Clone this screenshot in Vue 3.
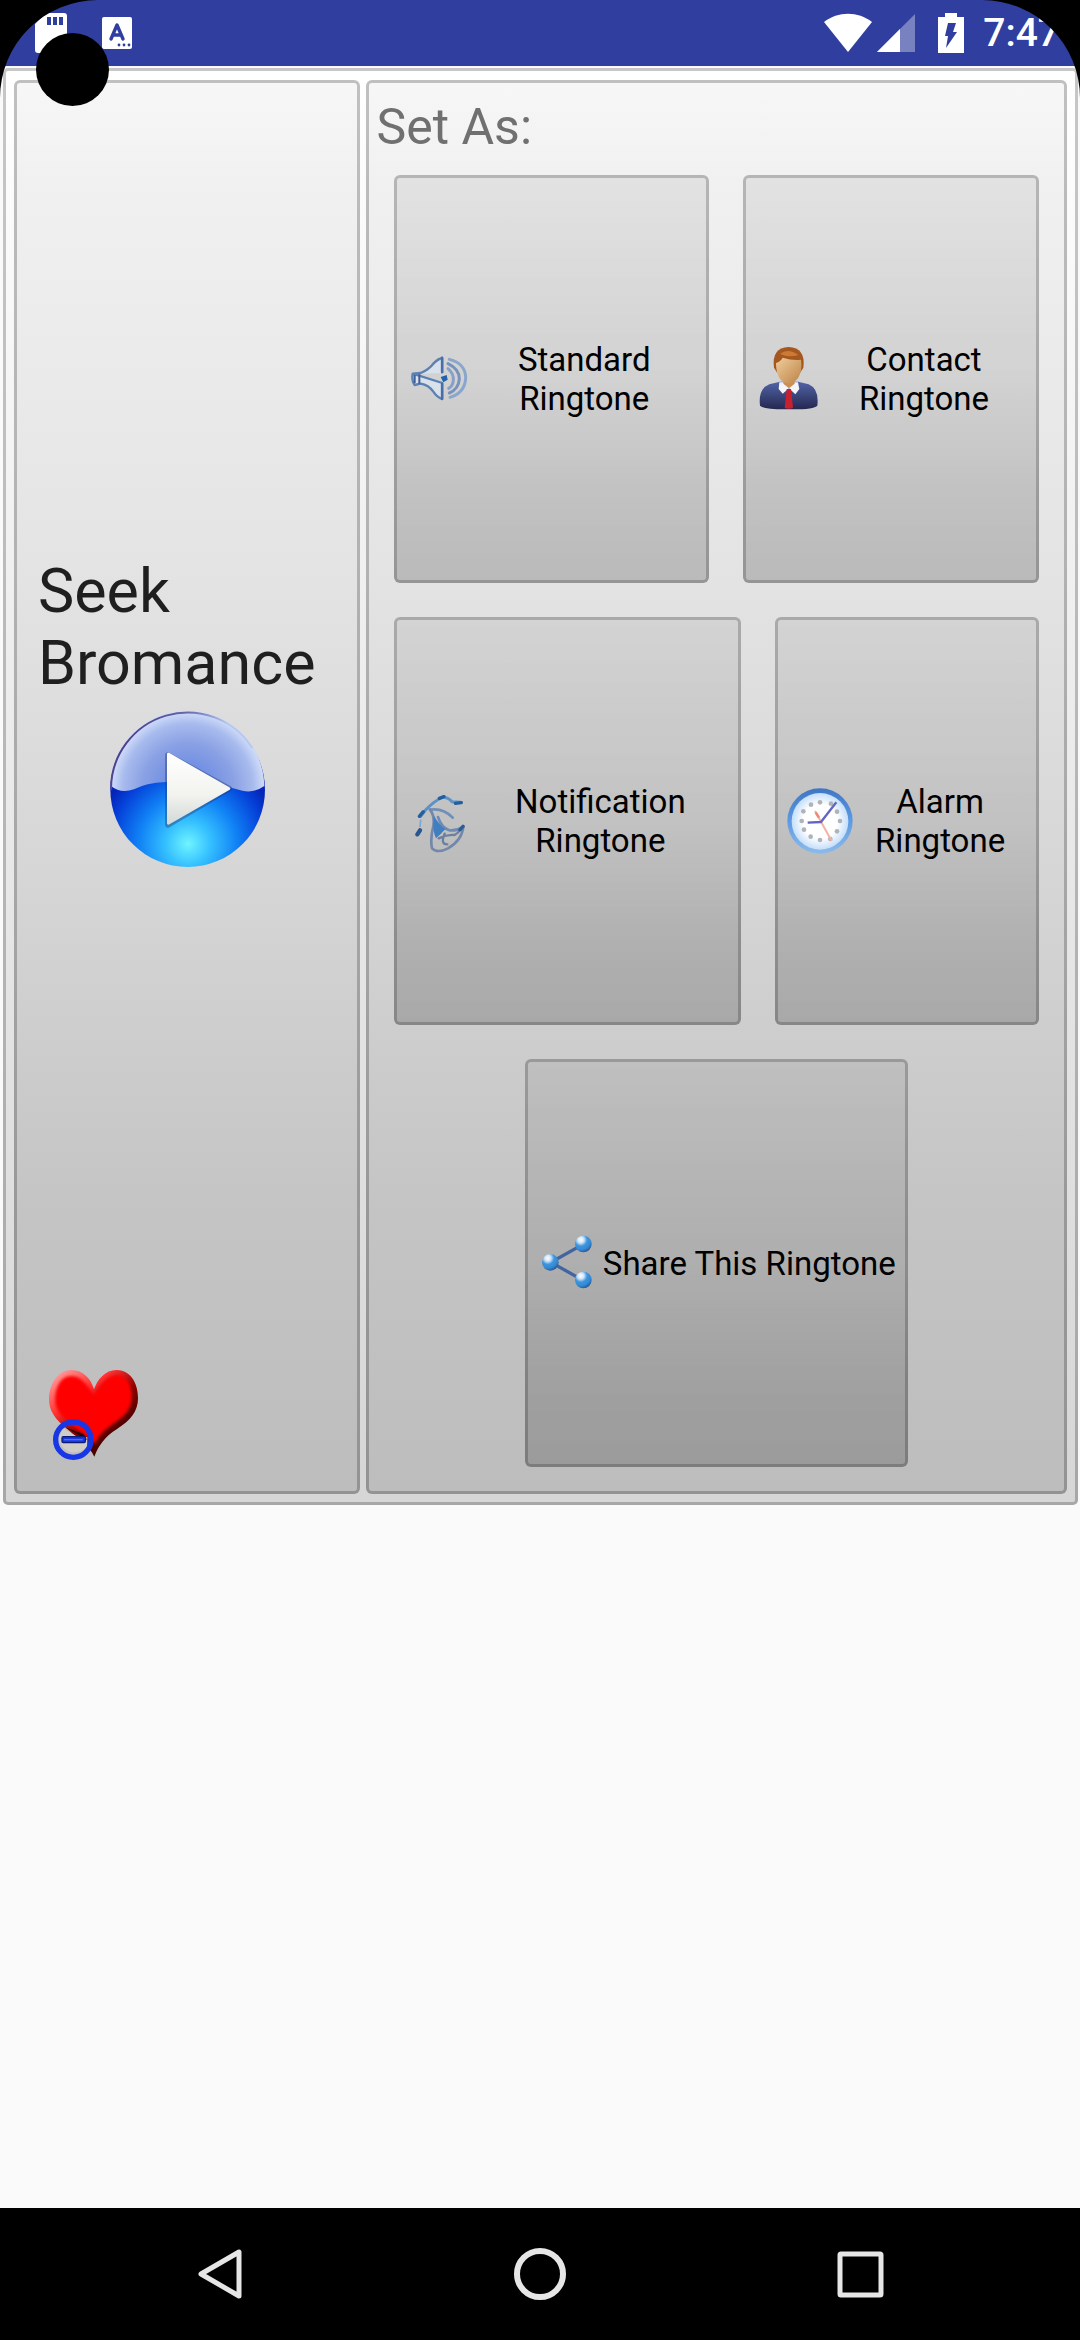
<script setup>
import { ref } from 'vue'

const title = 'Seek Bromance'
const time = ref('7:47')
const isPlaying = ref(false)
const lastAction = ref('')

function togglePlay() {
  isPlaying.value = !isPlaying.value
}

function setAs(kind) {
  lastAction.value = kind
}

// Hour marks of the little alarm clock
const hourMarks = [
  [300, 128], [318, 152], [327, 180], [318, 211], [298, 234], [267, 237],
  [239, 227], [219, 206], [212, 180], [217, 151], [240, 131], [267, 124]
]
</script>

<template>
  <div class="screen">
    <header class="status-bar">
      <div class="status-left">
        <svg class="status-icon" viewBox="0 0 36 44" aria-hidden="true">
          <path d="M14 2h18a3 3 0 0 1 3 3v34a3 3 0 0 1-3 3H6a3 3 0 0 1-3-3V13z" fill="#fff" />
          <path d="M15 6h4v8h-4zM21 6h4v8h-4zM27 6h4v8h-4z" fill="#303f9f" />
        </svg>
        <svg class="status-icon" viewBox="0 0 36 44" aria-hidden="true">
          <rect x="3" y="6" width="30" height="32" rx="2" fill="#fff" />
          <path d="M12 28l6-14 6 14M14 24h8" fill="none" stroke="#303f9f" stroke-width="3.4" stroke-linecap="round" stroke-linejoin="round" />
          <circle cx="20" cy="34" r="1.4" fill="#303f9f" />
          <circle cx="25" cy="34" r="1.4" fill="#303f9f" />
          <circle cx="30" cy="34" r="1.4" fill="#303f9f" />
        </svg>
      </div>
      <div class="status-right">
        <svg class="wifi" viewBox="0 0 48 40" aria-hidden="true">
          <path d="M0 9C14-2 34-2 48 9L24 39z" fill="#fff" />
        </svg>
        <svg class="signal" viewBox="0 0 38 40" aria-hidden="true">
          <path d="M0 39L38 1v38z" fill="#fff" opacity="0.35" />
          <path d="M0 39L23 16v23z" fill="#fff" />
        </svg>
        <svg class="battery" viewBox="0 0 26 40" aria-hidden="true">
          <path d="M7 0h12v4h7v36H0V4h7z" fill="#fff" />
          <path d="M10 10h8l-3 9h4L8 35l2-12H7z" fill="#303f9f" />
        </svg>
        <span class="time">{{ time }}</span>
      </div>
    </header>

    <main class="content">
      <div class="card">
        <section class="panel song">
          <h1 class="song-title">{{ title }}</h1>
          <button class="play-btn" aria-label="Play" @click="togglePlay">
            <svg viewBox="18 21 552 552" aria-hidden="true">
              <defs>
                <radialGradient id="orb" gradientUnits="userSpaceOnUse" cx="297" cy="455" r="270">
                  <stop offset="0" stop-color="#6ff4ff" />
                  <stop offset="0.25" stop-color="#35c0ff" />
                  <stop offset="0.55" stop-color="#1080f5" />
                  <stop offset="0.85" stop-color="#0540d8" />
                  <stop offset="1" stop-color="#0425b8" />
                </radialGradient>
                <radialGradient id="gloss" gradientUnits="userSpaceOnUse" cx="297" cy="290" r="230">
                  <stop offset="0" stop-color="#5a7fe2" />
                  <stop offset="0.6" stop-color="#8aa1e4" />
                  <stop offset="0.85" stop-color="#a8bbee" />
                  <stop offset="1" stop-color="#cfdcf8" />
                </radialGradient>
                <linearGradient id="rim" x1="0" y1="0" x2="1" y2="0.3">
                  <stop offset="0" stop-color="#35257f" />
                  <stop offset="0.5" stop-color="#6a6aae" />
                  <stop offset="0.8" stop-color="#b8c8ec" />
                </linearGradient>
                <linearGradient id="arrow" x1="0" y1="0" x2="0" y2="1">
                  <stop offset="0" stop-color="#fff" />
                  <stop offset="0.6" stop-color="#f2f2ee" />
                  <stop offset="1" stop-color="#d2dad8" />
                </linearGradient>
              </defs>
              <circle cx="296" cy="293" r="232" fill="url(#orb)" />
              <path d="M66 290A230 230 0 0 1 526 282Q495 304 460 296Q415 284 380 275Q300 262 230 270Q170 273 135 292Q95 306 66 282z" fill="url(#gloss)" />
              <path d="M66 293A230 230 0 0 1 490 168" fill="none" stroke="url(#rim)" stroke-width="6" />
              <path d="M237 190L420 290L237 398z" fill="#25356e" stroke="#25356e" stroke-width="18" stroke-linejoin="round" opacity="0.4" />
              <path d="M238 186L420 290L238 394z" fill="url(#arrow)" stroke="url(#arrow)" stroke-width="8" stroke-linejoin="round" />
            </svg>
          </button>
          <button class="fav-btn" aria-label="Remove from favorites">
            <svg viewBox="96 42 366 366" aria-hidden="true">
              <defs>
                <linearGradient id="heartEdge" x1="0" y1="0" x2="0.8" y2="1">
                  <stop offset="0" stop-color="#ffb4b4" />
                  <stop offset="0.35" stop-color="#ff3030" />
                  <stop offset="0.58" stop-color="#8a0000" />
                  <stop offset="1" stop-color="#1c0000" />
                </linearGradient>
                <filter id="soft" x="-10%" y="-10%" width="120%" height="120%">
                  <feGaussianBlur stdDeviation="4" />
                </filter>
              </defs>
              <path d="M283 350C268 318 238 300 205 270C165 238 145 212 147 172C150 125 178 90 214 90C250 90 274 118 282 148C292 118 316 90 350 90C388 90 414 125 414 174C414 215 392 240 350 268C315 290 295 318 283 350z" fill="url(#heartEdge)" />
              <path d="M284 312C262 286 225 268 196 238C172 216 164 196 166 172C168 135 186 108 214 108C244 108 260 135 282 164C302 132 322 106 350 106C380 106 396 135 395 172C395 206 374 228 344 248C312 270 296 286 284 312z" fill="#f00" filter="url(#soft)" />
              <path d="M188 265L228 288L262 292L262 318Q240 344 205 334Q178 322 178 292z" fill="#d0cdc9" />
              <path d="M195 262L262 300L250 282z" fill="#300" />
              <circle cx="220" cy="299" r="53" fill="none" stroke="#1737e6" stroke-width="16" />
              <rect x="186" y="290" width="70" height="18" rx="4" fill="#1737e6" stroke="#0b1a77" stroke-width="4" />
              <path d="M192 299h56" stroke="#5070e8" stroke-width="4" />
            </svg>
          </button>
        </section>

        <section class="panel actions">
          <h2 class="actions-title">Set As:</h2>
          <div class="rows">
            <div class="row">
              <button class="tile standard" @click="setAs('standard')">
                <svg class="tile-icon" viewBox="78 77 198 198" aria-hidden="true">
                  <path d="M98 160L122 158Q146 148 160 130Q174 115 187 113V158M187 188V236Q172 232 160 214Q146 194 122 190L104 194Q94 180 98 160z" fill="#d9e2ec" stroke="#5c80b2" stroke-width="7" stroke-linejoin="round" />
                  <path d="M118 162v28M104 164v24" stroke="#3f5f97" stroke-width="6" />
                  <path d="M186 112v44M186 190v46" stroke="#4a6cab" stroke-width="7" stroke-linecap="round" />
                  <path d="M182 170L200 164L203 178L190 186z" fill="#1f62ad" />
                  <g fill="none" stroke-width="9" stroke-linecap="round">
                    <path d="M204 145Q222 160 220 180Q218 198 206 204" stroke="#86a0c8" />
                    <path d="M204 130Q238 146 238 176Q236 206 208 218" stroke="#7891bd" />
                    <path d="M208 117Q258 130 257 174Q254 218 210 231" stroke="#8ba6cd" />
                  </g>
                </svg>
                <span class="tile-label">Standard Ringtone</span>
              </button>
              <button class="tile contact" @click="setAs('contact')">
                <svg class="tile-icon" viewBox="75 77 198 198" aria-hidden="true">
                  <defs>
                    <linearGradient id="suit" x1="0" y1="0" x2="0" y2="1">
                      <stop offset="0" stop-color="#5163a8" />
                      <stop offset="1" stop-color="#24284f" />
                    </linearGradient>
                    <linearGradient id="face" x1="0" y1="0" x2="1" y2="1">
                      <stop offset="0" stop-color="#f0cd9c" />
                      <stop offset="1" stop-color="#bd8347" />
                    </linearGradient>
                  </defs>
                  <path d="M90 256Q84 205 118 192L150 184H204L236 192Q268 206 262 256Q252 268 176 267Q100 268 90 256z" fill="url(#suit)" />
                  <path d="M148 186L204 186L208 206L196 222L177 204L158 220L146 206z" fill="#f4f5fa" />
                  <path d="M170 206h13l6 57q-13 4-25 0z" fill="#c8202e" />
                  <path d="M160 170h34v20l-17 14l-17-14z" fill="#c98f55" />
                  <path d="M132 142Q124 82 176 80Q228 82 220 142L210 158H142z" fill="#a4581f" />
                  <path d="M138 128Q152 124 158 112Q190 122 213 118Q218 150 204 174Q177 204 150 176Q138 158 138 128z" fill="url(#face)" />
                  <path d="M150 100Q175 82 205 104Q180 112 158 104z" fill="#cc7a35" />
                </svg>
                <span class="tile-label">Contact Ringtone</span>
              </button>
            </div>
            <div class="row">
              <button class="tile notification" @click="setAs('notification')">
                <svg class="tile-icon" viewBox="78 81 198 198" aria-hidden="true">
                  <g fill="none" stroke-linecap="round" stroke-linejoin="round">
                    <path d="M122 166L136 148Q160 122 188 108Q206 110 216 122L242 124" stroke="#5d92c7" stroke-width="9" />
                    <path d="M118 166L130 152M178 112L192 107M226 127L244 125" stroke="#235f9f" stroke-width="10" />
                    <path d="M122 178L120 196" stroke="#7ba6d0" stroke-width="5" />
                    <path d="M112 220L120 208" stroke="#28568f" stroke-width="13" />
                    <path d="M150 146Q190 140 218 170" stroke="#6f8fb9" stroke-width="8" />
                    <path d="M150 146Q165 166 160 195Q150 235 156 262Q172 278 204 262Q246 238 250 196" stroke="#7287aa" stroke-width="8" />
                    <path d="M174 168Q184 200 208 208Q230 210 250 198" stroke="#6f8ab3" stroke-width="8" />
                    <path d="M194 218Q180 250 202 250M176 232Q200 220 224 222Q236 216 240 206" stroke="#6d7f9f" stroke-width="7" />
                    <path d="M240 206L249 196" stroke="#2b5c99" stroke-width="10" />
                  </g>
                  <path d="M162 164Q176 190 196 204Q182 220 168 232Q156 208 162 164z" fill="#3f7fc0" />
                </svg>
                <span class="tile-label">Notification Ringtone</span>
              </button>
              <button class="tile alarm" @click="setAs('alarm')">
                <svg class="tile-icon" viewBox="168 81 198 198" aria-hidden="true">
                  <defs>
                    <linearGradient id="clockRim" x1="0" y1="0" x2="0" y2="1">
                      <stop offset="0" stop-color="#3f76c4" />
                      <stop offset="0.5" stop-color="#5d9ae2" />
                      <stop offset="1" stop-color="#8dbbe8" />
                    </linearGradient>
                    <radialGradient id="clockFace">
                      <stop offset="0.6" stop-color="#fff" />
                      <stop offset="1" stop-color="#c4defa" />
                    </radialGradient>
                  </defs>
                  <circle cx="267" cy="180" r="98" fill="url(#clockRim)" />
                  <circle cx="267" cy="181" r="85" fill="url(#clockFace)" />
                  <circle v-for="([x, y], i) in hourMarks" :key="i" :cx="x" :cy="y" r="7" fill="#b0b4b8" />
                  <path d="M252 150L270 182L302 240" fill="none" stroke="#f3b3a2" stroke-width="6" />
                  <path d="M254 154L264 170" stroke="#ee8a78" stroke-width="8" />
                  <path d="M230 185L270 183L316 124" fill="none" stroke="#6265c4" stroke-width="7" stroke-linejoin="round" />
                </svg>
                <span class="tile-label">Alarm Ringtone</span>
              </button>
            </div>
            <div class="row">
              <button class="tile share" @click="setAs('share')">
                <svg class="tile-icon" viewBox="108 147 198 198" aria-hidden="true">
                  <defs>
                    <radialGradient id="ball" cx="0.35" cy="0.25" r="0.75">
                      <stop offset="0" stop-color="#fff" />
                      <stop offset="0.25" stop-color="#cfe4f8" />
                      <stop offset="0.5" stop-color="#3f95dd" />
                      <stop offset="0.8" stop-color="#3288d2" />
                      <stop offset="1" stop-color="#2a5c9c" />
                    </radialGradient>
                  </defs>
                  <path d="M246 190L150 244L246 298" fill="none" stroke="#42659f" stroke-width="10" />
                  <circle cx="247" cy="189" r="25" fill="url(#ball)" />
                  <circle cx="148" cy="244" r="25" fill="url(#ball)" />
                  <circle cx="247" cy="297" r="25" fill="url(#ball)" />
                </svg>
                <span class="tile-label">Share This Ringtone</span>
              </button>
            </div>
          </div>
        </section>
      </div>
    </main>

    <nav class="nav-bar">
      <button class="nav-btn" aria-label="Back">
        <svg viewBox="0 0 56 56" aria-hidden="true">
          <path d="M47 6v44L9 28z" fill="none" stroke="#e6e6e6" stroke-width="5" stroke-linejoin="round" />
        </svg>
      </button>
      <button class="nav-btn" aria-label="Home">
        <svg viewBox="0 0 56 56" aria-hidden="true">
          <circle cx="28" cy="28" r="23" fill="none" stroke="#e6e6e6" stroke-width="6" />
        </svg>
      </button>
      <button class="nav-btn" aria-label="Recent apps">
        <svg viewBox="0 0 56 56" aria-hidden="true">
          <rect x="8" y="8" width="41" height="41" rx="1" fill="none" stroke="#e6e6e6" stroke-width="5" />
        </svg>
      </button>
    </nav>

    <!-- Display cutouts -->
    <svg class="corner corner-left" viewBox="0 0 98 98" aria-hidden="true">
      <path d="M0 0H98A98 98 0 0 0 0 98z" />
    </svg>
    <svg class="corner corner-right" viewBox="0 0 98 98" aria-hidden="true">
      <path d="M98 0H0A98 98 0 0 1 98 98z" />
    </svg>
    <div class="camera"></div>
  </div>
</template>

<style>
body {
  margin: 0;
  background: #fafafa;
}
</style>

<style scoped>
.screen {
  position: relative;
  display: flex;
  flex-direction: column;
  min-height: 100vh;
  font-family: Roboto, "Noto Sans", sans-serif;
  background: #fafafa;
  overflow: hidden;
}

button {
  margin: 0;
  padding: 0;
  border: none;
  background: none;
  font-family: inherit;
  cursor: pointer;
}

svg {
  display: block;
}

/* Status bar */
.status-bar {
  display: flex;
  justify-content: space-between;
  align-items: center;
  height: 66px;
  padding: 0 20px 0 32px;
  background: #303f9f;
}

.status-left {
  display: flex;
  gap: 31px;
}

.status-icon {
  width: 36px;
  height: 44px;
}

.status-right {
  display: flex;
  align-items: center;
}

.wifi {
  width: 48px;
  height: 40px;
}

.signal {
  width: 38px;
  height: 40px;
  margin-left: 5px;
}

.battery {
  width: 26px;
  height: 40px;
  margin-left: 23px;
}

.time {
  margin-left: 19px;
  color: #fff;
  font-size: 39px;
  font-weight: 500;
  line-height: 46px;
}

/* Card and panels */
.content {
  flex: 1;
  padding: 2px 2px 0 3px;
}

.card {
  display: grid;
  grid-template-columns: 33fr 67fr;
  gap: 6px;
  padding: 9px 8px 8px;
  border: 3px solid rgba(0, 0, 0, 0.22);
  border-radius: 5px;
  background: linear-gradient(#fff, #f0f0f0 35%, #e4e4e4 65%, #d6d6d6) border-box;
}

.panel {
  display: flex;
  flex-direction: column;
  border: 3px solid rgba(0, 0, 0, 0.22);
  border-radius: 6px;
  background: linear-gradient(#f7f7f7, #f0f0f0 8%, #e4e4e4 34%, #d6d6d6 56%, #c4c4c4 80%, #bdbdbd) border-box;
}

.song {
  padding: 0 15px 15px;
}

.song-title {
  margin: auto 6px 0;
  color: #1f1f1f;
  font-size: 61px;
  font-weight: 400;
  line-height: 72px;
}

.play-btn {
  align-self: center;
  width: 184px;
  height: 184px;
}

.fav-btn {
  width: 122px;
  height: 122px;
  margin-top: auto;
}

.actions-title {
  margin: 0;
  padding: 15px 8px 19px;
  color: #707070;
  font-size: 50px;
  font-weight: 400;
  line-height: 58px;
}

.rows {
  display: flex;
  flex-direction: column;
  gap: 34px;
  padding: 0 25px 24px;
}

.row {
  display: flex;
  justify-content: center;
  gap: 34px;
}

.tile {
  display: flex;
  align-items: center;
  box-sizing: border-box;
  min-height: 408px;
  padding: 0 9px;
  border: 3px solid rgba(0, 0, 0, 0.2);
  border-radius: 6px;
  background: linear-gradient(
    rgba(0, 0, 0, 0.06),
    rgba(0, 0, 0, 0.1) 50%,
    rgba(0, 0, 0, 0.16) 80%,
    rgba(0, 0, 0, 0.18)
  ) border-box;
  color: #000;
  font-size: 33px;
  line-height: 39px;
}

.tile:active {
  background: rgba(0, 0, 0, 0.3);
}

.standard {
  flex: 15 1 0;
}

.contact {
  flex: 14 1 0;
}

.notification {
  flex: 27 1 0;
}

.alarm {
  flex: 20 1 0;
}

.tile-icon {
  flex: none;
  width: 66px;
  height: 66px;
}

.tile-label {
  flex: 1;
  text-align: center;
}

.share .tile-label {
  white-space: nowrap;
}

/* Navigation bar */
.nav-bar {
  display: grid;
  grid-template-columns: repeat(3, 1fr);
  align-items: center;
  justify-items: center;
  height: 132px;
  padding: 0 60px;
  background: #000;
}

.nav-btn {
  width: 56px;
  height: 56px;
}

/* Cutouts over the screen */
.corner {
  position: absolute;
  top: 0;
  width: 98px;
  height: 98px;
  pointer-events: none;
}

.corner-left {
  left: 0;
}

.corner-right {
  right: 0;
}

.camera {
  position: absolute;
  top: 33px;
  left: 36px;
  width: 73px;
  height: 73px;
  border-radius: 50%;
  background: #000;
}
</style>
